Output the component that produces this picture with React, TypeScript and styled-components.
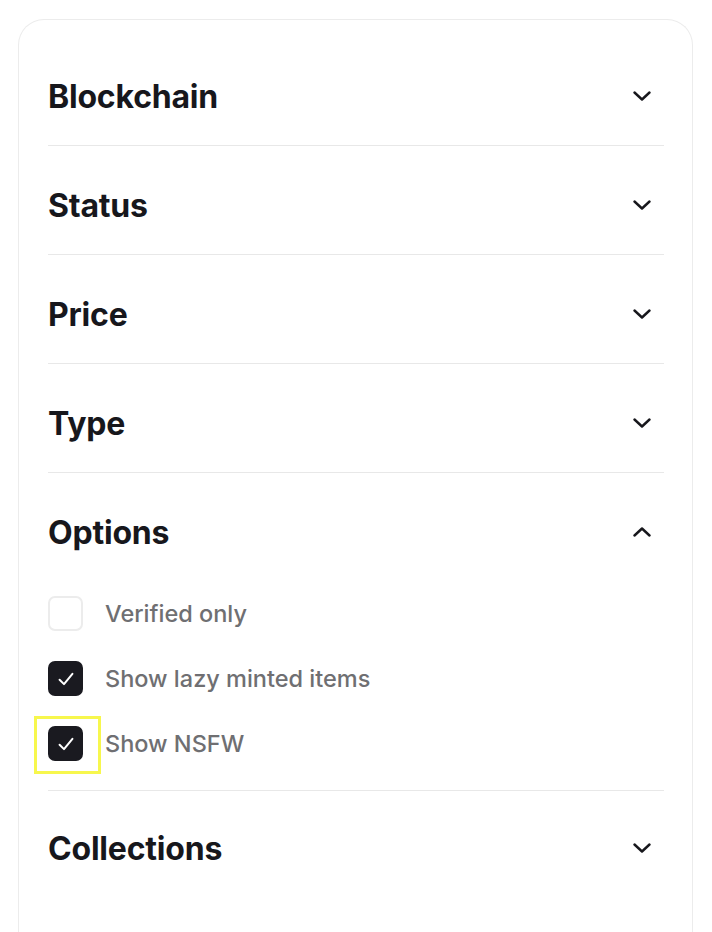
import React, { FC } from 'react'
import styled, { createGlobalStyle } from 'styled-components'

const GlobalStyle = createGlobalStyle`
  html, body {
    margin: 0;
    padding: 0;
    background: #ffffff;
    font-family: Inter, "Noto Sans", sans-serif;
  }
`

type Option = { label: string; checked: boolean; focused?: boolean }

const options: Option[] = [
  { label: 'Verified only', checked: false },
  { label: 'Show lazy minted items', checked: true },
  { label: 'Show NSFW', checked: true, focused: true },
]

const Chevron: FC<{ up?: boolean }> = ({ up }) => (
  <ChevronIcon viewBox='0 0 18 10' $up={up}>
    <polyline points='1.5 1.5 9 8.5 16.5 1.5' />
  </ChevronIcon>
)

const Check: FC = () => (
  <CheckIcon viewBox='0 0 14 14'>
    <polyline points='2.5 7.5 5.6 10.6 11.5 3.4' />
  </CheckIcon>
)

const FilterSection: FC<{ title: string; open?: boolean; last?: boolean; children?: React.ReactNode }> = ({ title, open, last, children }) => (
  <Section $last={last}>
    <Header>
      <Title>{title}</Title>
      <Chevron up={open} />
    </Header>
    {open && children}
  </Section>
)

const App: FC = () => (
  <>
    <GlobalStyle />
    <Card>
      <FilterSection title='Blockchain' />
      <FilterSection title='Status' />
      <FilterSection title='Price' />
      <FilterSection title='Type' />
      <FilterSection title='Options' open>
        <OptionList>
          {options.map((o) => (
            <OptionRow key={o.label}>
              <Box $checked={o.checked}>
                {o.checked && <Check />}
                {o.focused && <FocusRing />}
              </Box>
              <OptionLabel>{o.label}</OptionLabel>
            </OptionRow>
          ))}
        </OptionList>
      </FilterSection>
      <FilterSection title='Collections' last />
    </Card>
  </>
)

const Card = styled.div`
  margin: 19px 19px 0 18px;
  border: 1px solid #ececec;
  border-bottom: none;
  border-radius: 26px 26px 0 0;
  padding: 17px 28px 60px 29px;
  min-height: 860px;
  box-sizing: border-box;
`

const Section = styled.section<{ $last?: boolean }>`
  padding: ${({ $last }) => ($last ? '30px' : '32px')} 0 22px;
  border-bottom: ${({ $last }) => ($last ? 'none' : '1px solid #e8e8e8')};
`

const Header = styled.div`
  display: flex;
  align-items: center;
  justify-content: space-between;
  height: 54px;
`

const Title = styled.h3`
  margin: 0;
  font-size: 32px;
  font-weight: 700;
  letter-spacing: -0.2px;
  color: #17171c;
`

const ChevronIcon = styled.svg<{ $up?: boolean }>`
  width: 18px;
  height: 10px;
  margin-right: 13px;
  fill: none;
  stroke: #17171c;
  stroke-width: 2.4;
  stroke-linecap: round;
  stroke-linejoin: round;
  transform: ${({ $up }) => ($up ? 'rotate(180deg)' : 'none')};
`

const OptionList = styled.div`
  display: flex;
  flex-direction: column;
  gap: 30px;
  margin: 37px 0 7px;
`

const OptionRow = styled.label`
  display: flex;
  align-items: center;
  gap: 22px;
`

const Box = styled.span<{ $checked: boolean }>`
  position: relative;
  display: flex;
  align-items: center;
  justify-content: center;
  width: 35px;
  height: 35px;
  box-sizing: border-box;
  border-radius: 7px;
  background: ${({ $checked }) => ($checked ? '#1a1a20' : '#ffffff')};
  border: 2px solid ${({ $checked }) => ($checked ? '#1a1a20' : '#ececec')};
`

const FocusRing = styled.span`
  position: absolute;
  left: -16px;
  top: -12px;
  width: 67px;
  height: 58px;
  box-sizing: border-box;
  border: 3px solid #f7f74d;
  pointer-events: none;
`

const CheckIcon = styled.svg`
  width: 20px;
  height: 20px;
  fill: none;
  stroke: #ffffff;
  stroke-width: 1.4;
  stroke-linecap: round;
  stroke-linejoin: round;
`

const OptionLabel = styled.span`
  font-size: 23.5px;
  font-weight: 500;
  color: #6f6f72;
`

export default App
